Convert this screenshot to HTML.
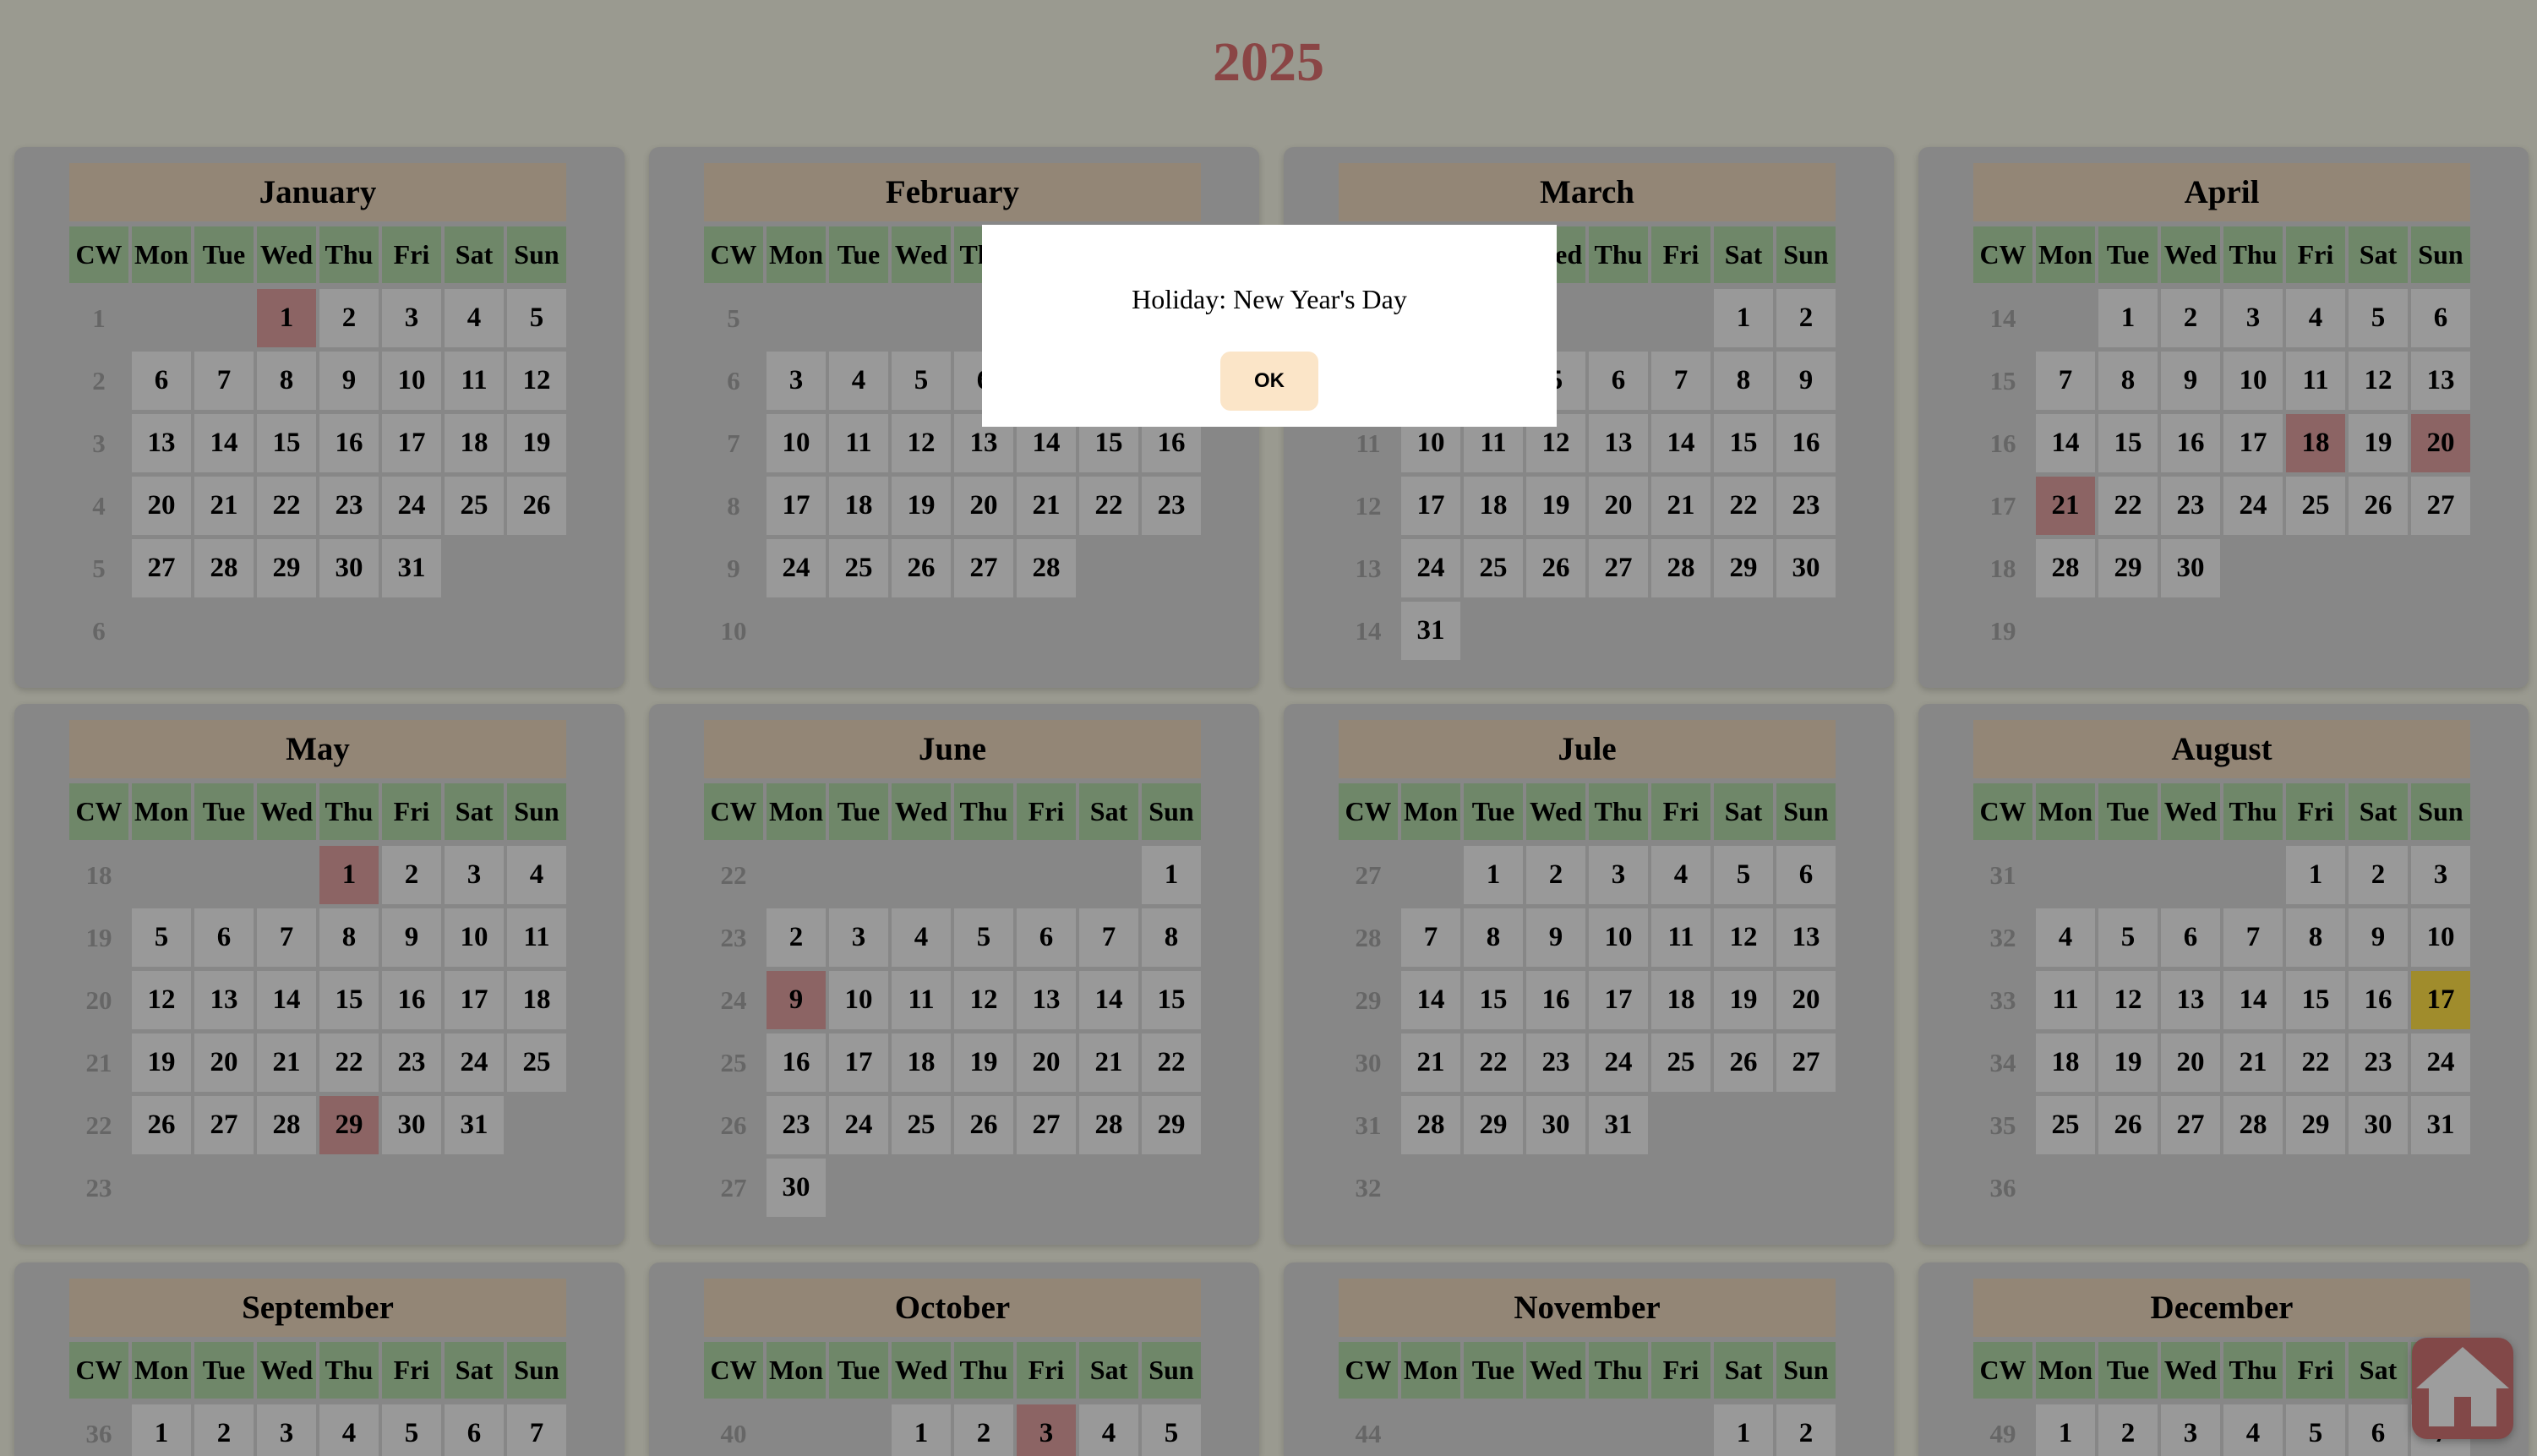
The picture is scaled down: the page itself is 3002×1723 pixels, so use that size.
<!DOCTYPE html>
<html><head><meta charset="utf-8"><style>
html,body{margin:0;padding:0;height:1723px;overflow:hidden}
body{width:3002px;height:1723px;overflow:hidden;background:#9a9a90;font-family:"Liberation Serif",serif;position:relative}
h1{position:absolute;left:0;right:0;top:36px;margin:0;text-align:center;font-size:66px;font-weight:bold;color:#8a4545}
.c{position:absolute;width:722px;height:640px;background:#878787;border-radius:12px;box-shadow:0 3px 8px rgba(0,0,0,.18);overflow:hidden}
.c.b{height:229px;border-radius:12px 12px 0 0}
.m{position:absolute;left:65px;top:19px;width:588px;height:69px;background:#938676;text-align:center;line-height:69px;font-weight:bold;font-size:39px}
.g{position:absolute;left:65px;top:94px;width:588px;display:grid;grid-template-columns:repeat(8,70px);column-gap:4px;row-gap:5px;grid-auto-rows:69px}
.g>*{margin:0;display:flex;align-items:center;justify-content:center;font-weight:bold;font-size:33px;font-style:normal;text-decoration:none}
.g>u{background:#6f8769;font-size:32px;height:67px;margin-bottom:1px}
.g>p{background:#999}
.g>b{color:#666;font-size:31px}
.g>p.h{background:#8c6464}
.g>p.t{background:#a08c2c}
.modal{position:absolute;left:1162px;top:266px;width:680px;height:239px;background:#fff}
.msg{position:absolute;left:0;right:0;top:70px;text-align:center;font-size:32px}
.ok{position:absolute;left:282px;top:150px;width:116px;height:70px;background:#fbe5c8;border-radius:12px;font-family:"Liberation Sans",sans-serif;font-weight:bold;font-size:24px;text-align:center;line-height:70px}
.home{position:absolute;left:2854px;top:1583px;width:120px;height:120px;background:#824848;border-radius:18px;box-shadow:0 3px 10px rgba(0,0,0,.3)}
</style></head><body>
<h1>2025</h1>

<div class="c" style="left:17px;top:174px"><div class="m">January</div><div class="g">
<u>CW</u><u>Mon</u><u>Tue</u><u>Wed</u><u>Thu</u><u>Fri</u><u>Sat</u><u>Sun</u>
<b>1</b><i></i><i></i><p class="h">1</p><p>2</p><p>3</p><p>4</p><p>5</p>
<b>2</b><p>6</p><p>7</p><p>8</p><p>9</p><p>10</p><p>11</p><p>12</p>
<b>3</b><p>13</p><p>14</p><p>15</p><p>16</p><p>17</p><p>18</p><p>19</p>
<b>4</b><p>20</p><p>21</p><p>22</p><p>23</p><p>24</p><p>25</p><p>26</p>
<b>5</b><p>27</p><p>28</p><p>29</p><p>30</p><p>31</p><i></i><i></i>
<b>6</b></div></div>

<div class="c" style="left:768px;top:174px"><div class="m">February</div><div class="g">
<u>CW</u><u>Mon</u><u>Tue</u><u>Wed</u><u>Thu</u><u>Fri</u><u>Sat</u><u>Sun</u>
<b>5</b><i></i><i></i><i></i><i></i><i></i><p>1</p><p>2</p>
<b>6</b><p>3</p><p>4</p><p>5</p><p>6</p><p>7</p><p>8</p><p>9</p>
<b>7</b><p>10</p><p>11</p><p>12</p><p>13</p><p>14</p><p>15</p><p>16</p>
<b>8</b><p>17</p><p>18</p><p>19</p><p>20</p><p>21</p><p>22</p><p>23</p>
<b>9</b><p>24</p><p>25</p><p>26</p><p>27</p><p>28</p><i></i><i></i>
<b>10</b></div></div>

<div class="c" style="left:1519px;top:174px"><div class="m">March</div><div class="g">
<u>CW</u><u>Mon</u><u>Tue</u><u>Wed</u><u>Thu</u><u>Fri</u><u>Sat</u><u>Sun</u>
<b>9</b><i></i><i></i><i></i><i></i><i></i><p>1</p><p>2</p>
<b>10</b><p>3</p><p>4</p><p>5</p><p>6</p><p>7</p><p>8</p><p>9</p>
<b>11</b><p>10</p><p>11</p><p>12</p><p>13</p><p>14</p><p>15</p><p>16</p>
<b>12</b><p>17</p><p>18</p><p>19</p><p>20</p><p>21</p><p>22</p><p>23</p>
<b>13</b><p>24</p><p>25</p><p>26</p><p>27</p><p>28</p><p>29</p><p>30</p>
<b>14</b><p>31</p></div></div>

<div class="c" style="left:2270px;top:174px"><div class="m">April</div><div class="g">
<u>CW</u><u>Mon</u><u>Tue</u><u>Wed</u><u>Thu</u><u>Fri</u><u>Sat</u><u>Sun</u>
<b>14</b><i></i><p>1</p><p>2</p><p>3</p><p>4</p><p>5</p><p>6</p>
<b>15</b><p>7</p><p>8</p><p>9</p><p>10</p><p>11</p><p>12</p><p>13</p>
<b>16</b><p>14</p><p>15</p><p>16</p><p>17</p><p class="h">18</p><p>19</p><p class="h">20</p>
<b>17</b><p class="h">21</p><p>22</p><p>23</p><p>24</p><p>25</p><p>26</p><p>27</p>
<b>18</b><p>28</p><p>29</p><p>30</p><i></i><i></i><i></i><i></i>
<b>19</b></div></div>

<div class="c" style="left:17px;top:833px"><div class="m">May</div><div class="g">
<u>CW</u><u>Mon</u><u>Tue</u><u>Wed</u><u>Thu</u><u>Fri</u><u>Sat</u><u>Sun</u>
<b>18</b><i></i><i></i><i></i><p class="h">1</p><p>2</p><p>3</p><p>4</p>
<b>19</b><p>5</p><p>6</p><p>7</p><p>8</p><p>9</p><p>10</p><p>11</p>
<b>20</b><p>12</p><p>13</p><p>14</p><p>15</p><p>16</p><p>17</p><p>18</p>
<b>21</b><p>19</p><p>20</p><p>21</p><p>22</p><p>23</p><p>24</p><p>25</p>
<b>22</b><p>26</p><p>27</p><p>28</p><p class="h">29</p><p>30</p><p>31</p><i></i>
<b>23</b></div></div>

<div class="c" style="left:768px;top:833px"><div class="m">June</div><div class="g">
<u>CW</u><u>Mon</u><u>Tue</u><u>Wed</u><u>Thu</u><u>Fri</u><u>Sat</u><u>Sun</u>
<b>22</b><i></i><i></i><i></i><i></i><i></i><i></i><p>1</p>
<b>23</b><p>2</p><p>3</p><p>4</p><p>5</p><p>6</p><p>7</p><p>8</p>
<b>24</b><p class="h">9</p><p>10</p><p>11</p><p>12</p><p>13</p><p>14</p><p>15</p>
<b>25</b><p>16</p><p>17</p><p>18</p><p>19</p><p>20</p><p>21</p><p>22</p>
<b>26</b><p>23</p><p>24</p><p>25</p><p>26</p><p>27</p><p>28</p><p>29</p>
<b>27</b><p>30</p></div></div>

<div class="c" style="left:1519px;top:833px"><div class="m">Jule</div><div class="g">
<u>CW</u><u>Mon</u><u>Tue</u><u>Wed</u><u>Thu</u><u>Fri</u><u>Sat</u><u>Sun</u>
<b>27</b><i></i><p>1</p><p>2</p><p>3</p><p>4</p><p>5</p><p>6</p>
<b>28</b><p>7</p><p>8</p><p>9</p><p>10</p><p>11</p><p>12</p><p>13</p>
<b>29</b><p>14</p><p>15</p><p>16</p><p>17</p><p>18</p><p>19</p><p>20</p>
<b>30</b><p>21</p><p>22</p><p>23</p><p>24</p><p>25</p><p>26</p><p>27</p>
<b>31</b><p>28</p><p>29</p><p>30</p><p>31</p><i></i><i></i><i></i>
<b>32</b></div></div>

<div class="c" style="left:2270px;top:833px"><div class="m">August</div><div class="g">
<u>CW</u><u>Mon</u><u>Tue</u><u>Wed</u><u>Thu</u><u>Fri</u><u>Sat</u><u>Sun</u>
<b>31</b><i></i><i></i><i></i><i></i><p>1</p><p>2</p><p>3</p>
<b>32</b><p>4</p><p>5</p><p>6</p><p>7</p><p>8</p><p>9</p><p>10</p>
<b>33</b><p>11</p><p>12</p><p>13</p><p>14</p><p>15</p><p>16</p><p class="t">17</p>
<b>34</b><p>18</p><p>19</p><p>20</p><p>21</p><p>22</p><p>23</p><p>24</p>
<b>35</b><p>25</p><p>26</p><p>27</p><p>28</p><p>29</p><p>30</p><p>31</p>
<b>36</b></div></div>

<div class="c b" style="left:17px;top:1494px"><div class="m">September</div><div class="g">
<u>CW</u><u>Mon</u><u>Tue</u><u>Wed</u><u>Thu</u><u>Fri</u><u>Sat</u><u>Sun</u>
<b>36</b><p>1</p><p>2</p><p>3</p><p>4</p><p>5</p><p>6</p><p>7</p>
</div></div>

<div class="c b" style="left:768px;top:1494px"><div class="m">October</div><div class="g">
<u>CW</u><u>Mon</u><u>Tue</u><u>Wed</u><u>Thu</u><u>Fri</u><u>Sat</u><u>Sun</u>
<b>40</b><i></i><i></i><p>1</p><p>2</p><p class="h">3</p><p>4</p><p>5</p>
</div></div>

<div class="c b" style="left:1519px;top:1494px"><div class="m">November</div><div class="g">
<u>CW</u><u>Mon</u><u>Tue</u><u>Wed</u><u>Thu</u><u>Fri</u><u>Sat</u><u>Sun</u>
<b>44</b><i></i><i></i><i></i><i></i><i></i><p>1</p><p>2</p>
</div></div>

<div class="c b" style="left:2270px;top:1494px"><div class="m">December</div><div class="g">
<u>CW</u><u>Mon</u><u>Tue</u><u>Wed</u><u>Thu</u><u>Fri</u><u>Sat</u><u>Sun</u>
<b>49</b><p>1</p><p>2</p><p>3</p><p>4</p><p>5</p><p>6</p><p>7</p>
</div></div>

<div class="modal"><div class="msg">Holiday: New Year's Day</div><div class="ok">OK</div></div>

<div class="home"><svg width="120" height="120" viewBox="0 0 120 120"><path d="M60 11 L115 60 L100 60 L100 105 L70 105 L70 70 L50 70 L50 105 L20 105 L20 60 L5 60 Z" fill="#9d9d9d"/></svg></div>
</body></html>
